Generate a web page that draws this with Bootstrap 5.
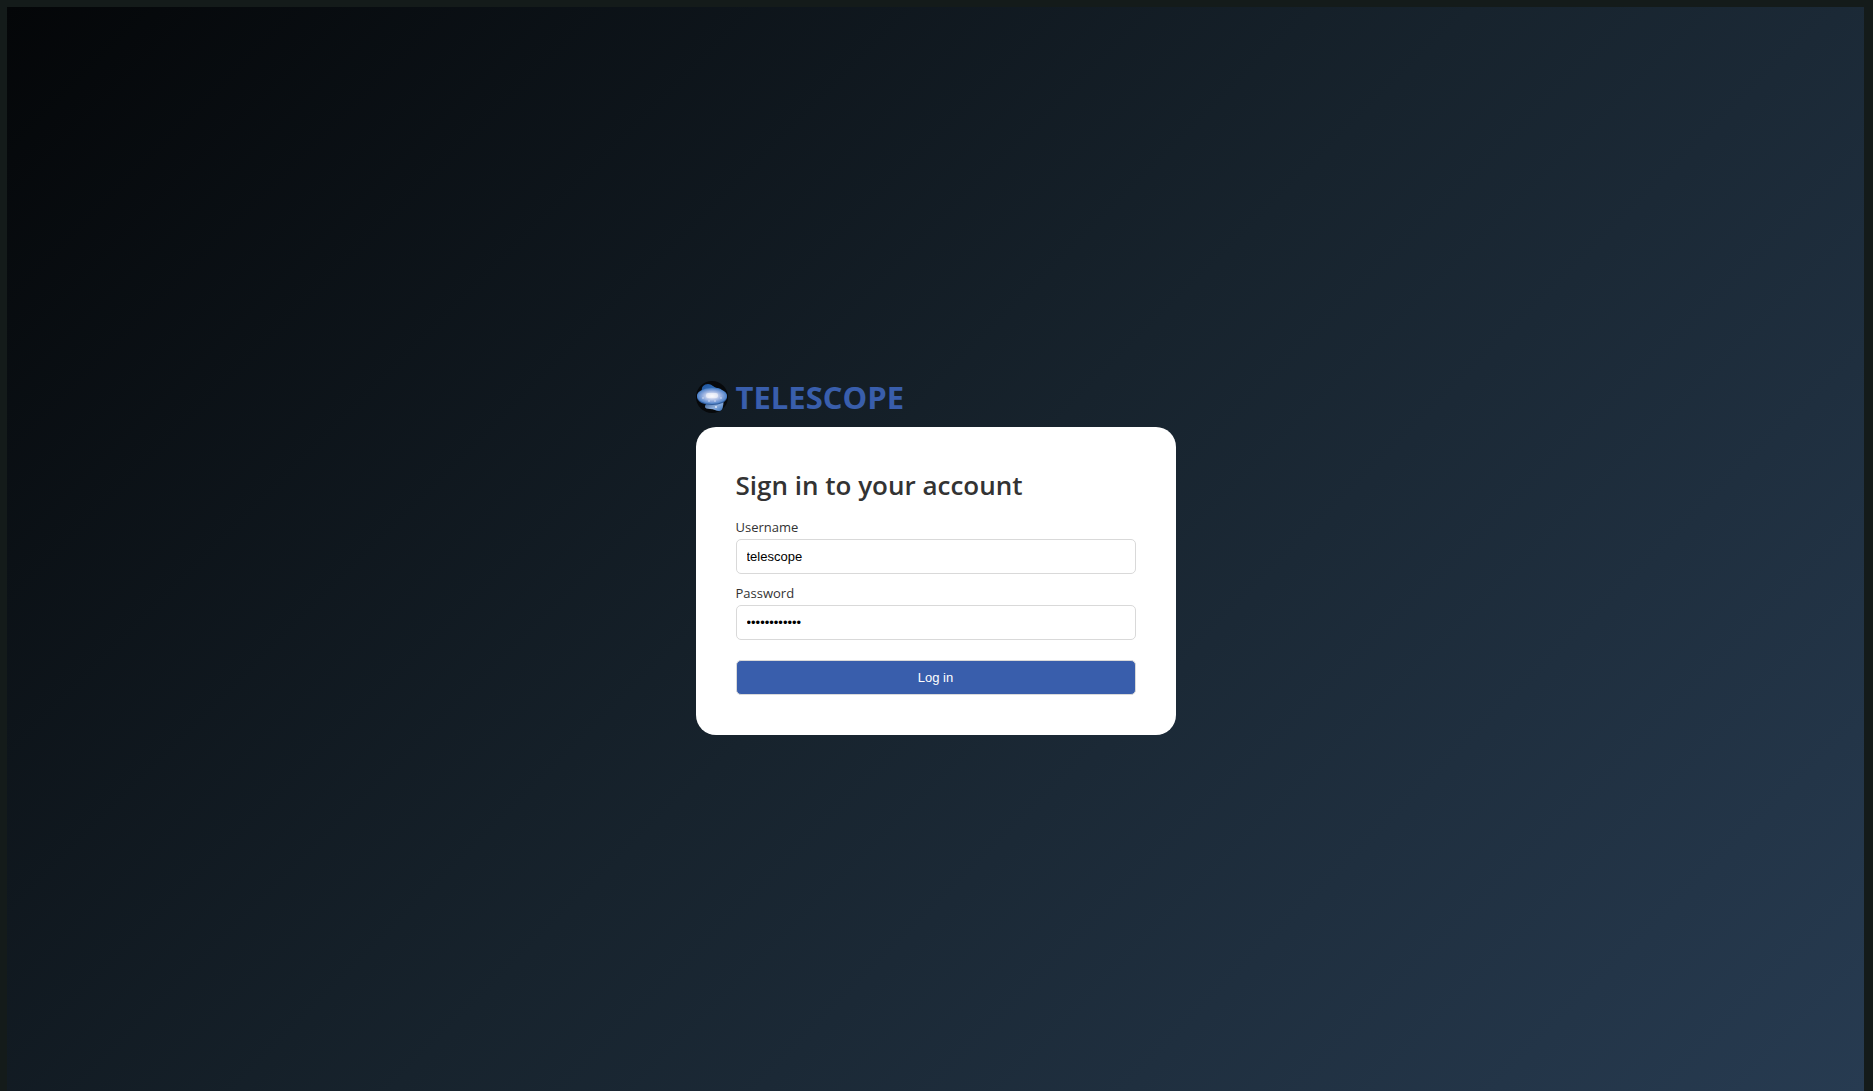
<!DOCTYPE html>
<html lang="en">
<head>
<meta charset="utf-8">
<meta name="viewport" content="width=device-width, initial-scale=1">
<title>Telescope</title>
<link href="https://cdn.jsdelivr.net/npm/bootstrap@5.3.0/dist/css/bootstrap.min.css" rel="stylesheet">
<style>
body { font-family: "Open Sans", "Noto Sans", sans-serif; background: #141b1a; color: #333; }
.page-frame { padding: 7px 9px 0 7px; }
.sky { background: linear-gradient(135deg, #040608, #17232d 50%, #273b51); }
.login-panel { width: 100%; max-width: 480px; margin-top: 12px; }
.brand { gap: 8px; height: 44px; margin-bottom: 8px; }
.brand-name { font-size: 31px; line-height: 44px; font-weight: 700; color: #395eac; }
.login-card { border: 0; border-radius: 20px; padding: 40px; }
.login-title { font-size: 26px; line-height: 36px; font-weight: 600; margin-bottom: 15px; color: #333; }
.field { margin-bottom: 10px; }
.login-card .form-label { display: block; font-size: 13px; line-height: 18px; margin-bottom: 3px; color: #333; }
.login-card .form-control, .login-btn { font: 13px/15px "Liberation Sans", Arial, sans-serif; padding: 9px 10px; border: 1px solid #d9d9d9; border-radius: 5px; }
.login-card .form-control { color: #000; height: 35px; }
.login-btn { height: 35px; margin-top: 10px; background: #395eac; color: #fff; }
.login-btn:hover { background: #30519a; color: #fff; }
</style>
<script src="https://cdn.jsdelivr.net/npm/bootstrap@5.3.0/dist/js/bootstrap.bundle.min.js"></script>
</head>
<body>
<div class="page-frame d-flex min-vh-100">
<main class="sky flex-grow-1 d-flex align-items-center justify-content-center">
<div class="login-panel">
<div class="brand d-flex align-items-center">
<svg width="32" height="32" viewBox="0 0 32 32" aria-hidden="true">
<defs>
<radialGradient id="core"><stop offset="0" stop-color="#f4f5fc"/><stop offset=".35" stop-color="#ccd5ee"/><stop offset=".7" stop-color="#86a4da"/><stop offset="1" stop-color="#4a80c6"/></radialGradient>
<linearGradient id="lobeTop" x1="0" y1="0" x2="1" y2="1"><stop offset="0" stop-color="#1c5299"/><stop offset="1" stop-color="#4583d0"/></linearGradient>
<linearGradient id="lobeLow" x1="0" y1="0" x2="1" y2="1"><stop offset="0" stop-color="#1f4474"/><stop offset=".6" stop-color="#8fb0de"/><stop offset="1" stop-color="#2f6cb8"/></linearGradient>
</defs>
<circle cx="16" cy="16" r="16" fill="#07090b"/>
<path d="M6 10C5 6 8 3 12 3c4 0 5 3 9 4 2 0 5 1 5 3l-4 3H7z" fill="url(#lobeTop)"/>
<path d="M11 20l16-2c0 3 1 4 0 7 0 3-2 5-4 5-3 0-5-2-9-2-3 0-5-1-5-2 0-3 2-2 2-6z" fill="url(#lobeLow)"/>
<path d="M1 16c0-5 6-8 15-8s15 3 15 8-7 8-15 8S1 21 1 16z" fill="#2f5a9a"/>
<ellipse cx="16" cy="15" rx="15" ry="8" fill="url(#core)"/>
<rect x="10" y="12" width="12" height="5" rx="2" fill="#fff" opacity=".5"/>
<g fill="#e4ecfa"><circle cx="7" cy="17" r=".7"/><circle cx="13" cy="20" r=".7"/><circle cx="19" cy="20" r=".7"/><circle cx="25" cy="17" r=".7"/><circle cx="20" cy="26" r=".9"/></g>
</svg>
<span class="brand-name">TELESCOPE</span>
</div>
<form class="card login-card" onsubmit="return false">
<h1 class="login-title">Sign in to your account</h1>
<div class="field">
<label class="form-label" for="username">Username</label>
<input class="form-control shadow-none" type="text" id="username" value="telescope">
</div>
<div class="field">
<label class="form-label" for="password">Password</label>
<input class="form-control shadow-none" type="password" id="password" value="telescope123">
</div>
<button class="btn login-btn w-100" type="submit">Log in</button>
</form>
</div>
</main>
</div>
</body>
</html>
